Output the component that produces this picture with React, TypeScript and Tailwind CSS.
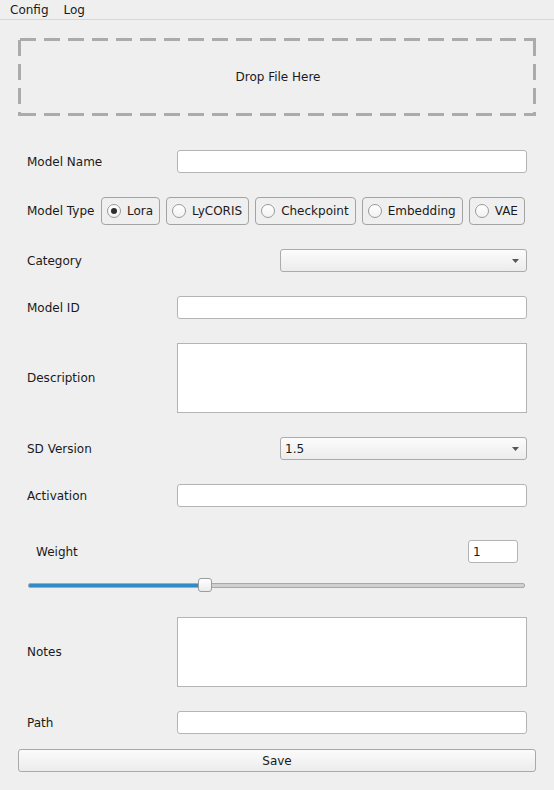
import React from "react";

const MODEL_TYPES = ["Lora", "LyCORIS", "Checkpoint", "Embedding", "VAE"];

function Field({ className = "" }: { className?: string }) {
  return (
    <div
      className={`h-[23px] bg-white border border-[#b4b4b4] rounded-[3px] ${className}`}
    />
  );
}

function TextArea() {
  return <div className="flex-1 h-[70px] bg-white border border-[#b4b4b4]" />;
}

function Combo({ value }: { value?: string }) {
  return (
    <div className="ml-auto w-[247px] h-[23px] flex items-center pl-[4px] pr-[7px] rounded-[3px] border border-[#ababab] bg-gradient-to-b from-[#fcfcfc] to-[#ececec]">
      <span className="flex-1">{value}</span>
      <svg viewBox="0 0 7 4" className="w-[7px] h-[4px]">
        <path d="M0 0h7L3.5 4z" fill="#555555" />
      </svg>
    </div>
  );
}

function Radio({ label, checked }: { label: string; checked?: boolean }) {
  return (
    <div className="shrink-0 h-[28px] flex items-center gap-[6px] pl-[5px] pr-[6px] border border-[#a3a3a3] rounded-[4px] whitespace-nowrap">
      <span className="w-[14px] h-[14px] rounded-full border border-[#9a9a9a] bg-gradient-to-b from-[#ffffff] to-[#f2f2f2] flex items-center justify-center">
        {checked && <span className="w-[6px] h-[6px] rounded-full bg-[#2e2e2e]" />}
      </span>
      <span>{label}</span>
    </div>
  );
}

function Row({
  label,
  className = "",
  children,
}: {
  label: string;
  className?: string;
  children: React.ReactNode;
}) {
  return (
    <div className={`flex items-center ${className}`}>
      <span className="w-[150px] shrink-0 whitespace-nowrap">{label}</span>
      {children}
    </div>
  );
}

export default function App() {
  return (
    <div className="w-[554px] h-[790px] overflow-hidden bg-[#efefef] text-[12px] text-[#1a1a1a] font-['DejaVu_Sans',sans-serif]">
      {/* Menu bar */}
      <div className="h-[20px] border-b border-[#d8d8d8] flex items-center gap-[15px] pl-[10px]">
        <span>Config</span>
        <span>Log</span>
      </div>

      {/* Drop zone */}
      <div className="relative mx-[18px] mt-[18px] h-[78px] flex items-center justify-center">
        <svg className="absolute inset-0 w-full h-full" viewBox="0 0 518 78">
          <g stroke="#ababab" strokeWidth="3" strokeDasharray="16 8" strokeDashoffset="-2">
            <line x1="0" y1="1.5" x2="518" y2="1.5" />
            <line x1="0" y1="76.5" x2="518" y2="76.5" />
            <line x1="1.5" y1="0" x2="1.5" y2="78" />
            <line x1="516.5" y1="0" x2="516.5" y2="78" />
          </g>
        </svg>
        <span className="relative pl-[2px]">Drop File Here</span>
      </div>

      <div className="px-[27px]">
        <Row label="Model Name" className="mt-[34px]">
          <Field className="flex-1" />
        </Row>

        <div className="mt-[24px] flex items-center gap-[6px]">
          <span className="w-[68px] shrink-0 whitespace-nowrap">Model Type</span>
          {MODEL_TYPES.map((t, i) => (
            <Radio key={t} label={t} checked={i === 0} />
          ))}
        </div>

        <Row label="Category" className="mt-[24px]">
          <Combo />
        </Row>

        <Row label="Model ID" className="mt-[24px]">
          <Field className="flex-1" />
        </Row>

        <Row label="Description" className="mt-[24px]">
          <TextArea />
        </Row>

        <Row label="SD Version" className="mt-[24px]">
          <Combo value="1.5" />
        </Row>

        <Row label="Activation" className="mt-[24px]">
          <Field className="flex-1" />
        </Row>

        {/* Weight */}
        <div className="mt-[33px] flex items-center pl-[9px] pr-[9px]">
          <span className="flex-1">Weight</span>
          <div className="w-[50px] h-[23px] bg-white border border-[#b4b4b4] rounded-[3px] flex items-center pl-[4px]">
            1
          </div>
        </div>

        {/* Slider */}
        <div className="relative mt-[15px] h-[14px] ml-[1px] mr-[2px] flex items-center">
          <div className="w-full h-[5px] rounded-[2px] bg-[#d0d0d0] border border-[#a9a9a9] overflow-hidden">
            <div className="w-[176px] h-full bg-[#308cc6]" />
          </div>
          <div className="absolute left-[170px] top-0 w-[14px] h-[14px] rounded-[3px] border border-[#9c9c9c] bg-gradient-to-b from-[#ffffff] to-[#ececec]" />
        </div>

        <Row label="Notes" className="mt-[25px]">
          <TextArea />
        </Row>

        <Row label="Path" className="mt-[24px]">
          <Field className="flex-1" />
        </Row>

        <div className="-mx-[9px] mt-[15px] h-[23px] flex items-center justify-center rounded-[3px] border border-[#a9a9a9] bg-gradient-to-b from-[#fbfbfb] to-[#ececec]">
          Save
        </div>
      </div>
    </div>
  );
}
